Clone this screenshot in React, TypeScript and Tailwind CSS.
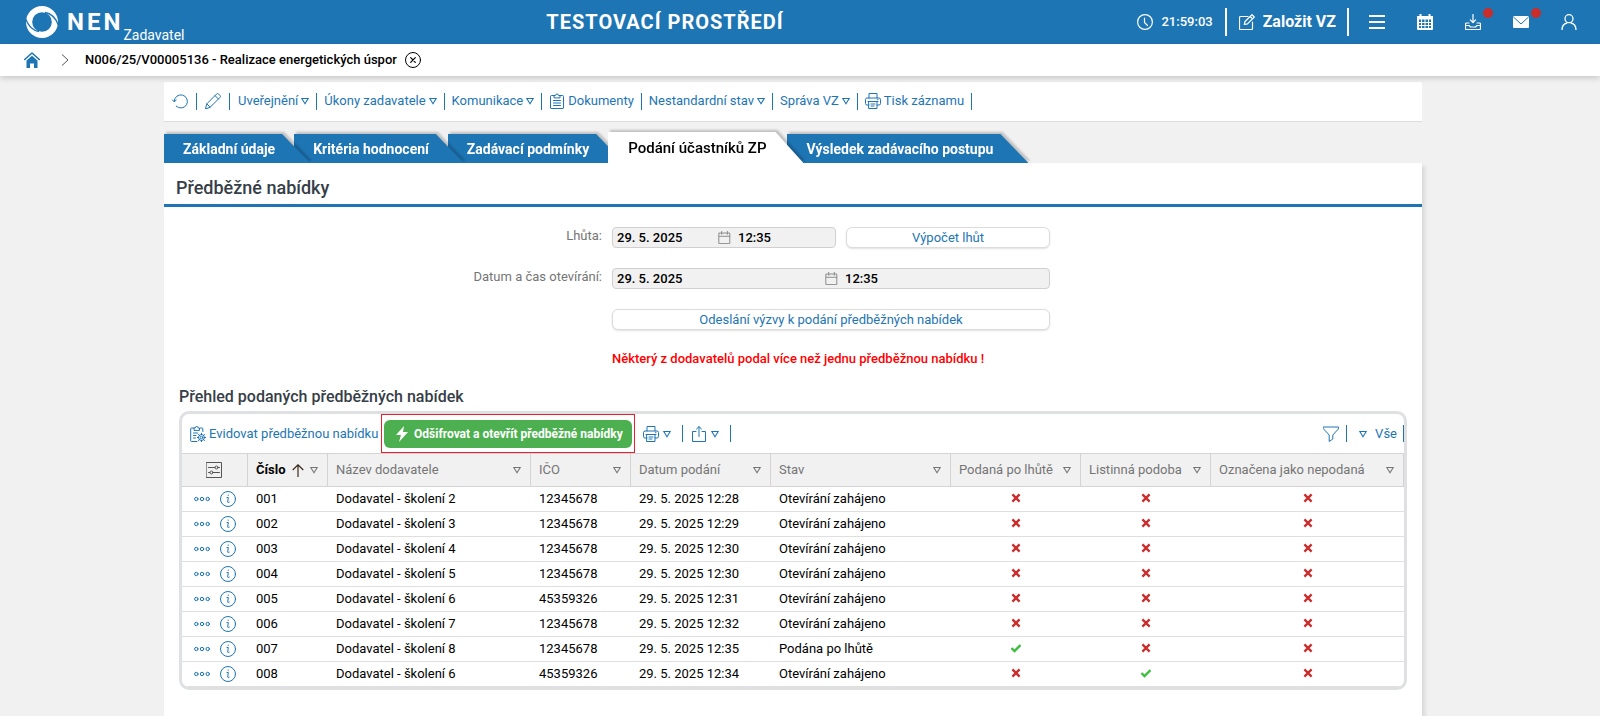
import type { ReactNode } from "react";
import clsx from "clsx";

type IconProps = { size?: number; className?: string; children: ReactNode };

function Icon({ size = 16, className, children }: IconProps) {
  return (
    <svg
      width={size}
      height={size}
      viewBox="0 0 16 16"
      fill="none"
      stroke="currentColor"
      strokeWidth={1}
      strokeLinecap="round"
      strokeLinejoin="round"
      aria-hidden="true"
      className={clsx("shrink-0", className)}
    >
      {children}
    </svg>
  );
}

const Caret = () => (
  <svg width="8" height="8" viewBox="0 0 8 8" fill="none" stroke="currentColor" strokeWidth="1.1" className="shrink-0" aria-hidden="true">
    <path d="M.8 1.500h6.400L4 6.800z" />
  </svg>
);

const Separator = () => <span className="h-[17px] w-px shrink-0 bg-[#1e75b4]" />;

const PrinterIcon = () => (
  <Icon>
    <path d="M4 5V.5h8V5M4 12H2A1.5 1.5 0 0 1 .5 10.500V6.500A1.500 1.500 0 0 1 2 5h12a1.500 1.500 0 0 1 1.500 1.500v4A1.500 1.500 0 0 1 14 12h-2M4 8.500h8v7H4zM3 8.500h10M6 11h4M6 13h3M12.500 6.700h.5" />
  </Icon>
);

const ClipboardIcon = () => (
  <Icon>
    <path d="M5 2.500H2.500a1 1 0 0 0-1 1V15a.6.6 0 0 0 .6.5h11.800a.6.6 0 0 0 .6-.5V3.500a1 1 0 0 0-1-1H11M5 4.500V2.500h1.500a1.500 1.500 0 0 1 3 0H11v2zM4.500 7.500h7M4.500 10h7M4.500 12.500h7" />
  </Icon>
);

const SmallCalendar = () => (
  <Icon size={13} className="text-[#8a8a8a]">
    <path d="M1.500 2.500h13v13h-13zM1.500 6.500h13M4.500 .5v3.500M11.500 .5v3.500" strokeWidth={1.200} />
  </Icon>
);

function Header() {
  const iconButton = "relative flex h-11 w-12 items-center justify-center";
  const dot = "absolute right-1 top-2 size-2.5 rounded-full bg-[#cb2c2c]";
  return (
    <header className="flex h-11 items-center bg-[#1e75b4] pl-[25px] pr-[7px] text-white">
      <a href="#" className="flex items-center" aria-label="NEN Zadavatel">
        <svg width="34" height="34" viewBox="0 0 34 34" aria-hidden="true">
          <circle cx="17" cy="17" r="16" fill="#fff" />
          <circle cx="17" cy="17" r="9.800" fill="#1e75b4" />
          <path d="M20 7.500C26.500 8.500 31 13.500 33.500 20.500M14 26.500C7.500 25.500 3 20.500 .5 13.500" fill="none" stroke="#1e75b4" strokeWidth="1.300" />
        </svg>
        <span className="ml-2 text-2xl font-bold leading-6 tracking-[3px]">NEN</span>
        <span className="mt-[26px] text-sm leading-4">Zadavatel</span>
      </a>
      <h1 className="flex-1 pl-2 text-center text-xl font-bold tracking-wider">TESTOVACÍ PROSTŘEDÍ</h1>
      <div className="flex items-center">
        <Icon>
          <circle cx="8" cy="8" r="7.400" strokeWidth={1.200} />
          <path d="M7.500 4v4.500l3 3" strokeWidth={1.200} />
        </Icon>
        <time className="ml-2 text-[13px] font-medium">21:59:03</time>
        <span className="ml-3 h-7 w-0.5 bg-white" />
        <button type="button" className="flex items-center gap-2 px-3 pr-[11px] text-base font-bold">
          <Icon>
            <path d="M9 2.500H1.500a1 1 0 0 0-1 1v11a1 1 0 0 0 1 1h11a1 1 0 0 0 1-1V8M6 7.500L13 .7l2.300 2.300L8.500 9.800 5.300 10.500zM11.200 2.500l2.300 2.300" strokeWidth={1.200} />
          </Icon>
          Založit VZ
        </button>
        <span className="mr-1 h-7 w-0.5 bg-white" />
        <button type="button" aria-label="Menu" className={iconButton}>
          <Icon>
            <path d="M0 2h16M0 8h16M0 14h16" strokeWidth={2} strokeLinecap="butt" />
          </Icon>
        </button>
        <button type="button" aria-label="Kalendář" className={iconButton}>
          <Icon>
            <path d="M0 2h2.500V0h2v2h7V0h2v2H16v3.500H0z" fill="currentColor" stroke="none" />
            <path d="M1 5v10h14V5" strokeWidth={2} strokeLinecap="butt" />
            <path d="M1 8.500h14M1 11.500h14M4.500 5.500v9M8 5.500v9M11.500 5.500v9" />
          </Icon>
        </button>
        <button type="button" aria-label="Stažené soubory" className={iconButton}>
          <Icon>
            <path d="M8 .5V8M5.300 5.800L8 8.500l2.700-2.700M4 9H1.500a1 1 0 0 0-1 1v4.500a1 1 0 0 0 1 1h13a1 1 0 0 0 1-1V10a1 1 0 0 0-1-1H12M.5 11.500h3.500l1.500 1.500h5l1.500-1.500h3.500" strokeWidth={1.200} />
          </Icon>
          <span className={dot} />
        </button>
        <button type="button" aria-label="Zprávy" className={iconButton}>
          <Icon>
            <rect x="0" y="2" width="16" height="12" rx="1" fill="currentColor" stroke="none" />
            <path d="M.5 3L8 10l7.500-7" stroke="#1e75b4" />
          </Icon>
          <span className={dot} />
        </button>
        <button type="button" aria-label="Uživatel" className={iconButton}>
          <Icon>
            <circle cx="8" cy="4.700" r="4" strokeWidth={1.300} />
            <path d="M1 16c0-4 2.500-6.500 5-7M15 16c0-4-2.500-6.500-5-7" strokeWidth={1.300} />
          </Icon>
        </button>
      </div>
    </header>
  );
}

function Breadcrumb() {
  return (
    <nav className="relative z-10 flex h-8 items-center bg-white pl-6 text-black shadow-[0_2px_6px_rgba(0,0,0,0.18)]">
      <a href="#" aria-label="Domů" className="text-[#1e75b4]">
        <Icon>
          <path d="M.7 7.500L8 1l7.300 6.500" strokeWidth={1.600} />
          <path d="M2.500 8.500L8 3.700l5.500 4.800V16H10v-4.500H6V16H2.500z" fill="currentColor" stroke="none" />
        </Icon>
      </a>
      <svg width="8" height="12" viewBox="0 0 8 12" fill="none" stroke="#555" className="ml-[21px]" aria-hidden="true">
        <path d="M1 .5L7 6l-6 5.500" />
      </svg>
      <span className="ml-4 text-[13px] font-medium">N006/25/V00005136 - Realizace energetických úspor</span>
      <button type="button" aria-label="Zavřít" className="ml-2">
        <Icon>
          <circle cx="8" cy="8" r="7.500" />
          <path d="M5.700 5.700l4.600 4.600M10.300 5.700l-4.600 4.600" strokeWidth={1.200} />
        </Icon>
      </button>
    </nav>
  );
}

type MenuItem = { label: string; icon?: ReactNode; menu?: boolean };

const menu: MenuItem[] = [
  { label: "Uveřejnění", menu: true },
  { label: "Úkony zadavatele", menu: true },
  { label: "Komunikace", menu: true },
  { label: "Dokumenty", icon: <ClipboardIcon /> },
  { label: "Nestandardní stav", menu: true },
  { label: "Správa VZ", menu: true },
  { label: "Tisk záznamu", icon: <PrinterIcon /> },
];

function RecordToolbar() {
  return (
    <div className="mt-1.5 flex h-10 items-center gap-2 border-b border-[#dcdcdc] bg-white pb-px pl-2 text-[13px] text-[#1e75b4]">
      <button type="button" aria-label="Obnovit">
        <Icon>
          <path d="M2.200 8.500a6.600 6.600 0 1 1 2 4.700M.4 6.800l1.800 2 2-1.700" />
        </Icon>
      </button>
      <Separator />
      <button type="button" aria-label="Upravit">
        <Icon>
          <path d="M.5 15.500l1.300-4.700L11.500 1.100a1.500 1.500 0 0 1 2.200 0l1.200 1.200a1.500 1.500 0 0 1 0 2.200L5.200 14.200zM10 2.600L13.400 6M1.800 10.800l3.400 3.400" />
        </Icon>
      </button>
      <Separator />
      <div className="flex items-center gap-[7px]">
        {menu.map((item) => (
          <div key={item.label} className="flex items-center gap-[7px]">
            <button type="button" className="flex items-center gap-[3px]">
              {item.icon}
              {item.label}
              {item.menu && <Caret />}
            </button>
            <Separator />
          </div>
        ))}
      </div>
    </div>
  );
}

const tabs = [
  { label: "Základní údaje", z: "z-40" },
  { label: "Kritéria hodnocení", z: "z-30" },
  { label: "Zadávací podmínky", z: "z-20" },
  { label: "Podání účastníků ZP", z: "z-50", active: true },
  { label: "Výsledek zadávacího postupu", z: "z-10" },
];

function Tabs() {
  return (
    <div role="tablist" className="mt-2.5 flex h-[31px] items-end gap-3">
      {tabs.map((tab) => (
        <button
          key={tab.label}
          type="button"
          role="tab"
          aria-selected={!!tab.active}
          className={clsx(
            "relative whitespace-nowrap drop-shadow-[2px_-2px_1px_rgba(0,0,0,0.2)]",
            "after:absolute after:left-full after:top-0 after:-ml-0.5 after:h-full after:w-[30px] after:bg-inherit after:[clip-path:polygon(0_0,2px_0,100%_100%,0_100%)]",
            tab.z,
            tab.active
              ? "h-[31px] bg-white pl-5 pr-[9px] pt-0.5 text-[15px] font-medium text-black"
              : "h-[29px] bg-[#1e75b4] pl-[19px] pr-[7px] text-sm font-bold text-white",
          )}
        >
          {tab.label}
        </button>
      ))}
    </div>
  );
}

function DateTimeField({ id, label }: { id: string; label: string }) {
  const input = "w-full min-w-0 bg-transparent text-[13px] font-medium text-black outline-none";
  return (
    <div className="grid h-[21px] flex-1 grid-cols-2 items-center rounded border border-[#d0d0d0] bg-[#f1f1f1]">
      <div className="flex items-center pl-1">
        <input id={id} readOnly defaultValue="29. 5. 2025" className={input} />
      </div>
      <div className="flex items-center gap-[7px]">
        <span className="-ml-1.5">
          <SmallCalendar />
        </span>
        <input readOnly aria-label={`${label} čas`} defaultValue="12:35" className={input} />
      </div>
    </div>
  );
}

const formButton = "h-[21px] rounded-md border border-[#dcdcdc] bg-white text-[13px] text-[#1e75b4] shadow-[0_1px_2px_rgba(0,0,0,0.12)]";

function DeadlineForm() {
  return (
    <form className="grid grid-cols-[448fr_438fr_372fr] gap-y-5 pt-5 text-[13px] text-[#757575]">
      <label htmlFor="lhuta" className="pr-2.5 text-right leading-[18px]">
        Lhůta:
      </label>
      <div className="col-start-2 flex gap-2.5">
        <DateTimeField id="lhuta" label="Lhůta" />
        <button type="button" className={clsx(formButton, "w-[204px]")}>
          Výpočet lhůt
        </button>
      </div>
      <label htmlFor="otevirani" className="col-start-1 pr-2.5 text-right leading-[18px]">
        Datum a čas otevírání:
      </label>
      <div className="col-start-2 flex">
        <DateTimeField id="otevirani" label="Otevírání" />
      </div>
      <button type="button" className={clsx(formButton, "col-start-2")}>
        Odeslání výzvy k podání předběžných nabídek
      </button>
      <p className="col-start-2 font-medium leading-[18px] text-[#ff0000]">
        Některý z dodavatelů podal více než jednu předběžnou nabídku !
      </p>
    </form>
  );
}

const columns = [
  { label: "Název dodavatele", width: "w-[203px]" },
  { label: "IČO", width: "w-[100px]" },
  { label: "Datum podání", width: "w-[140px]" },
  { label: "Stav", width: "w-[180px]" },
  { label: "Podaná po lhůtě", width: "w-[130px]" },
  { label: "Listinná podoba", width: "w-[130px]" },
  { label: "Označena jako nepodaná", width: "w-[193px]" },
];

const rows = [
  { no: "001", supplier: "Dodavatel - školení 2", ico: "12345678", date: "29. 5. 2025 12:28", state: "Otevírání zahájeno", late: false, paper: false },
  { no: "002", supplier: "Dodavatel - školení 3", ico: "12345678", date: "29. 5. 2025 12:29", state: "Otevírání zahájeno", late: false, paper: false },
  { no: "003", supplier: "Dodavatel - školení 4", ico: "12345678", date: "29. 5. 2025 12:30", state: "Otevírání zahájeno", late: false, paper: false },
  { no: "004", supplier: "Dodavatel - školení 5", ico: "12345678", date: "29. 5. 2025 12:30", state: "Otevírání zahájeno", late: false, paper: false },
  { no: "005", supplier: "Dodavatel - školení 6", ico: "45359326", date: "29. 5. 2025 12:31", state: "Otevírání zahájeno", late: false, paper: false },
  { no: "006", supplier: "Dodavatel - školení 7", ico: "12345678", date: "29. 5. 2025 12:32", state: "Otevírání zahájeno", late: false, paper: false },
  { no: "007", supplier: "Dodavatel - školení 8", ico: "12345678", date: "29. 5. 2025 12:35", state: "Podána po lhůtě", late: true, paper: false },
  { no: "008", supplier: "Dodavatel - školení 6", ico: "45359326", date: "29. 5. 2025 12:34", state: "Otevírání zahájeno", late: false, paper: true },
];

function Mark({ value }: { value: boolean }) {
  return (
    <svg width="10" height="10" viewBox="0 0 10 10" fill="none" strokeWidth="2.3" className="mx-auto mb-0.5" role="img" aria-label={value ? "Ano" : "Ne"}>
      {value ? <path d="M.5 5l3 3L9.500 2" stroke="#3cbf3c" /> : <path d="M1.400 1.400l7.200 7.200M8.600 1.400L1.400 8.600" stroke="#cb2c2c" />}
    </svg>
  );
}

function OffersToolbar() {
  return (
    <div className="flex h-[39px] items-center text-[13px] text-[#1e75b4]">
      <button type="button" className="ml-2 mr-[3px] flex items-center gap-[3px] whitespace-nowrap">
        <Icon>
          <path d="M4 2H1.500a.8.8 0 0 0-.8.800V14.700c0 .5.300.8.800.8H7M10.500 2H12a.8.8 0 0 1 .8.800V5.500M4 4V2h1.200a1.500 1.500 0 0 1 3 0h1.300v2zM3.500 7h4M3.500 9.500h2.500M3.500 12h2" />
          <circle cx="11.500" cy="11.500" r="1.300" />
          <path d="M11.500 7.300v1.400M11.500 14.300v1.400M7.300 11.500h1.400M14.300 11.500h1.400M8.500 8.500l1 1M13.500 13.500l1 1M14.500 8.500l-1 1M9.500 13.500l-1 1" />
          <circle cx="11.500" cy="11.500" r="3" />
        </Icon>
        Evidovat předběžnou nabídku
      </button>
      <div className="flex h-[39px] items-center border border-[#e8202c] px-0.5">
        <button
          type="button"
          className="flex h-7 w-[248px] items-center justify-center gap-1 whitespace-nowrap rounded-md bg-[#4caf50] text-xs font-bold text-white"
        >
          <svg width="16" height="16" viewBox="0 0 16 16" fill="currentColor" aria-hidden="true">
            <path d="M10 0L2 9h5l-2 7 9-10H9z" />
          </svg>
          Odšifrovat a otevřít předběžné nabídky
        </button>
      </div>
      <button type="button" aria-label="Tisk" className="ml-2 mr-[11px] flex items-center gap-1">
        <PrinterIcon />
        <Caret />
      </button>
      <Separator />
      <button type="button" aria-label="Export" className="ml-2 mr-[11px] flex items-center gap-1">
        <Icon>
          <path d="M5 5.500H1.500v10h13v-10H11M8 10.500V.800M5.500 3L8 .6 10.500 3" />
        </Icon>
        <Caret />
      </button>
      <Separator />
      <button type="button" aria-label="Filtr" className="ml-auto mr-[7px]">
        <Icon>
          <path d="M.5 1h15v1.800L9.800 9v4l-3.600 2.500V9L.5 2.800z" />
        </Icon>
      </button>
      <Separator />
      <button type="button" className="ml-3 mr-1.5 flex items-center gap-2">
        <Caret />
        Vše
      </button>
      <Separator />
    </div>
  );
}

function OffersTable() {
  const th = "border-r border-[#d4d4d4] pl-2 pr-[9px] text-left font-normal";
  return (
    <table className="w-full table-fixed border-separate border-spacing-0 text-[13px] text-black">
      <thead className="text-[#757575]">
        <tr className="h-[34px] bg-[#f1f1f1] *:border-y *:border-[#d4d4d4]">
          <th className={clsx(th, "w-[66px]")}>
            <button type="button" aria-label="Nastavení sloupců" className="mx-auto block text-[#555]">
              <Icon>
                <rect x=".5" y=".5" width="15" height="15" />
                <path d="M2.500 5.500H9M12 5.500h1.500M2.500 10.500H4M7 10.500h6.500" />
                <circle cx="10.500" cy="5.500" r="1.500" />
                <circle cx="5.500" cy="10.500" r="1.500" />
              </Icon>
            </button>
          </th>
          <th className={clsx(th, "w-20")} aria-sort="ascending">
            <div className="flex items-center">
              <span className="font-bold text-black">Číslo</span>
              <svg width="12" height="13" viewBox="0 0 12 13" fill="none" stroke="#3a2a1a" strokeWidth="1.200" className="ml-1.5" aria-hidden="true">
                <path d="M6 13V1M.7 6L6 .8 11.300 6" />
              </svg>
              <button type="button" aria-label="Filtr Číslo" className="ml-auto">
                <Caret />
              </button>
            </div>
          </th>
          {columns.map((column) => (
            <th key={column.label} className={clsx(th, column.width)}>
              <div className="flex items-center justify-between whitespace-nowrap">
                {column.label}
                <button type="button" aria-label={`Filtr ${column.label}`}>
                  <Caret />
                </button>
              </div>
            </th>
          ))}
        </tr>
      </thead>
      <tbody>
        {rows.map((row) => (
          <tr key={row.no} className="h-[25px] *:border-b *:border-[#dfdfdf] *:px-2">
            <td>
              <div className="flex items-center gap-2.5 pl-1 text-[#1e75b4]">
                <button type="button" aria-label={`Akce ${row.no}`}>
                  <Icon>
                    <circle cx="2.300" cy="8" r="1.700" />
                    <circle cx="8" cy="8" r="1.700" />
                    <circle cx="13.700" cy="8" r="1.700" />
                  </Icon>
                </button>
                <button type="button" aria-label={`Detail ${row.no}`}>
                  <Icon>
                    <circle cx="8" cy="8" r="7.500" />
                    <path d="M7 6.500h1.300L7.700 11c0 .7.800.6 1.500.2M8.200 4v.4" />
                  </Icon>
                </button>
              </div>
            </td>
            <td>{row.no}</td>
            <td>{row.supplier}</td>
            <td>{row.ico}</td>
            <td>{row.date}</td>
            <td>{row.state}</td>
            <td>
              <Mark value={row.late} />
            </td>
            <td>
              <Mark value={row.paper} />
            </td>
            <td>
              <Mark value={false} />
            </td>
          </tr>
        ))}
      </tbody>
    </table>
  );
}

export default function App() {
  return (
    <div className="flex min-h-screen flex-col bg-[#f1f1f1] font-['Roboto',sans-serif]">
      <Header />
      <Breadcrumb />
      <main className="ml-[164px] mr-[178px] flex flex-1 flex-col">
        <RecordToolbar />
        <Tabs />
        <section className="flex-1 bg-white pb-6 shadow-[3px_3px_4px_rgba(0,0,0,0.1)]">
          <h2 className="border-b-[3px] border-[#1e75b4] pb-1 pl-3 pt-[13px] text-lg font-medium leading-6 text-[#363e48]">Předběžné nabídky</h2>
          <DeadlineForm />
          <h3 className="px-[15px] pb-1 pt-[19px] text-base font-medium leading-5 text-[#363e48]">Přehled podaných předběžných nabídek</h3>
          <div className="mx-[15px] overflow-hidden rounded-[10px] border-[3px] border-[#dfe0e2]">
            <OffersToolbar />
            <OffersTable />
          </div>
        </section>
      </main>
    </div>
  );
}
